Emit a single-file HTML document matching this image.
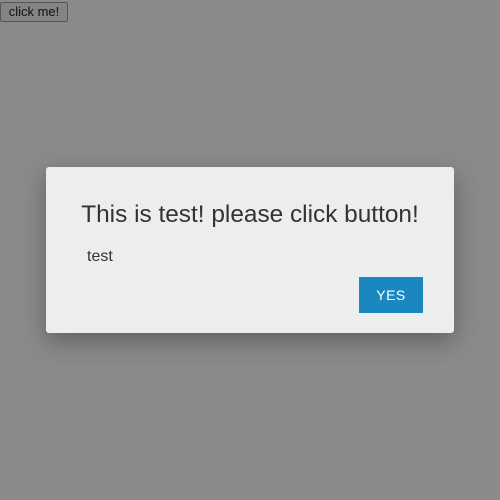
<!DOCTYPE html>
<html><head><style>
html,body{margin:0;width:500px;height:500px;background:#8a8a8a;overflow:hidden;font-family:"Liberation Sans",sans-serif}
.btn{position:absolute;left:0;top:2px;width:68px;height:20px;box-sizing:border-box;border:1px solid #555;border-radius:2px;background:#848484;font-size:13px;line-height:18px;text-align:center;color:#111}
.dlg{position:absolute;left:46px;top:167px;width:408px;height:166px;background:#eceded;border-radius:3px;box-shadow:0 8px 24px rgba(0,0,0,0.3)}
.t{position:absolute;left:0;width:100%;top:34px;text-align:center;font-size:24.4px;color:#333}
.m{position:absolute;left:41px;top:81px;font-size:16px;color:#333}
.y{position:absolute;left:313px;top:110px;width:64px;height:36px;background:#1a87bf;color:#fff;font-size:14px;line-height:36px;text-align:center;letter-spacing:0.5px}
</style></head><body>
<div class="btn">click me!</div>
<div class="dlg">
<div class="t">This is test! please click button!</div>
<div class="m">test</div>
<div class="y">YES</div>
</div>
</body></html>
